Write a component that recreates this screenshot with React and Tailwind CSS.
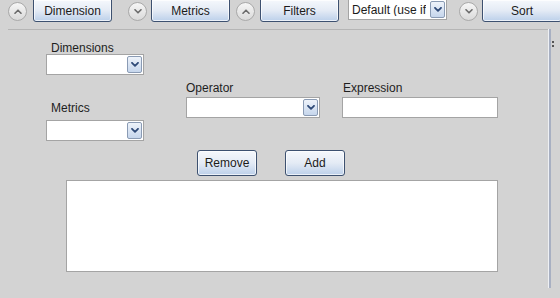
import React from 'react';

const font = { fontFamily: '"Liberation Sans", Arial, sans-serif' };

const Chevron = ({ up = false, color = '#2f4a78', w = 8, h = 5, sw = 1.8 }) => (
  <svg width={w} height={h} viewBox="0 0 8 5" className="block">
    <path
      d={up ? 'M1 4.2 L4 1.2 L7 4.2' : 'M1 0.8 L4 3.8 L7 0.8'}
      fill="none"
      stroke={color}
      strokeWidth={sw}
      strokeLinecap="round"
      strokeLinejoin="round"
    />
  </svg>
);

const Expander = ({ up, className = '' }) => (
  <div
    className={`w-[19px] h-[19px] rounded-full border border-[#a9a9a9] bg-gradient-to-b from-[#f6f6f6] to-[#dadada] flex items-center justify-center shrink-0 ${className}`}
  >
    <Chevron up={up} color="#6b6b6b" w={8} h={5} sw={1.6} />
  </div>
);

const TabButton = ({ children, className = '' }) => (
  <div
    className={`w-[79px] h-[23px] -mt-px shrink-0 rounded-b-[3px] border border-[#3d5170] bg-gradient-to-b from-[#f5f8fc] via-[#e4ebf5] to-[#bcd0ea] shadow-[inset_0_0_0_1px_rgba(255,255,255,0.7)] flex items-center justify-center text-[12px] text-[#1b1b1b] ${className}`}
  >
    {children}
  </div>
);

const DropBtn = () => (
  <div className="w-[15px] h-[17px] rounded-[2px] border border-[#8a9bb4] bg-gradient-to-b from-[#eef3fa] to-[#c6d6ec] flex items-center justify-center">
    <Chevron />
  </div>
);

const Combo = ({ className = '', children }) => (
  <div className={`h-[21px] bg-white border border-[#a4a4a4] flex items-center justify-between pl-[3px] pr-px ${className}`}>
    <span className="text-[12px] text-[#1b1b1b] leading-none truncate">{children}</span>
    <DropBtn />
  </div>
);

const Label = ({ children, className = '' }) => (
  <div className={`h-[14px] leading-[14px] text-[12px] text-[#1e1e1e] ${className}`}>{children}</div>
);

const FormButton = ({ children }) => (
  <div className="w-[60px] h-[26px] rounded-[3px] border border-[#3d5170] bg-gradient-to-b from-[#f5f8fc] via-[#e4ebf5] to-[#bcd0ea] shadow-[inset_0_0_0_1px_rgba(255,255,255,0.7)] flex items-center justify-center text-[12px] text-[#1b1b1b]">
    {children}
  </div>
);

export default function App() {
  return (
    <div className="w-[560px] h-[298px] bg-[#d3d3d3] overflow-hidden flex flex-col" style={font}>
      {/* toolbar */}
      <div className="h-[29px] flex items-start shrink-0">
        <Expander up className="ml-[8px] mt-[2px]" />
        <TabButton className="ml-[6px]">Dimension</TabButton>
        <Expander className="ml-[16px] mt-[2px]" />
        <TabButton className="ml-[4px]">Metrics</TabButton>
        <Expander up className="ml-[6px] mt-[2px]" />
        <TabButton className="ml-[5px]">Filters</TabButton>
        <Combo className="ml-[9px] w-[99px] h-[20px] -mt-px shrink-0 border-[#9a9a9a]">Default (use if</Combo>
        <Expander className="ml-[12px] mt-[2px]" />
        <TabButton className="ml-[4px] w-[80px]">Sort</TabButton>
      </div>

      {/* panel */}
      <div className="flex ml-[8px]">
        <div className="w-[540px] h-[259px] border-t border-[#b5b5b5] flex flex-col">
          <div className="flex">
            <div className="ml-[38px] w-[98px] flex flex-col">
              <Label className="mt-[11px] ml-[5px]">Dimensions</Label>
              <Combo className="-mt-px" />
              <Label className="mt-[26px] ml-[5px]">Metrics</Label>
              <Combo className="mt-[5px] h-[20px]" />
            </div>
            <div className="ml-[42px] w-[134px] flex flex-col">
              <Label className="mt-[51px]">Operator</Label>
              <Combo className="mt-[2px]" />
            </div>
            <div className="ml-[22px] w-[156px] flex flex-col">
              <Label className="mt-[51px] ml-px">Expression</Label>
              <div className="mt-[2px] h-[21px] bg-white border border-[#a4a4a4]" />
            </div>
          </div>
          <div className="flex gap-[28px] ml-[189px] mt-[9px]">
            <FormButton>Remove</FormButton>
            <FormButton>Add</FormButton>
          </div>
          <div className="ml-[58px] mt-[4px] w-[432px] h-[92px] bg-white border border-[#a4a4a4]" />
        </div>
        <div className="w-[3px] h-[259px] border-l border-[#eef0f4] bg-[#a8b0c2]" />
        <div className="ml-px mt-[12px] flex flex-col gap-[2px]">
          <div className="w-[2px] h-[2px] bg-[#555]" />
          <div className="w-[2px] h-[2px] bg-[#555]" />
        </div>
      </div>
    </div>
  );
}
